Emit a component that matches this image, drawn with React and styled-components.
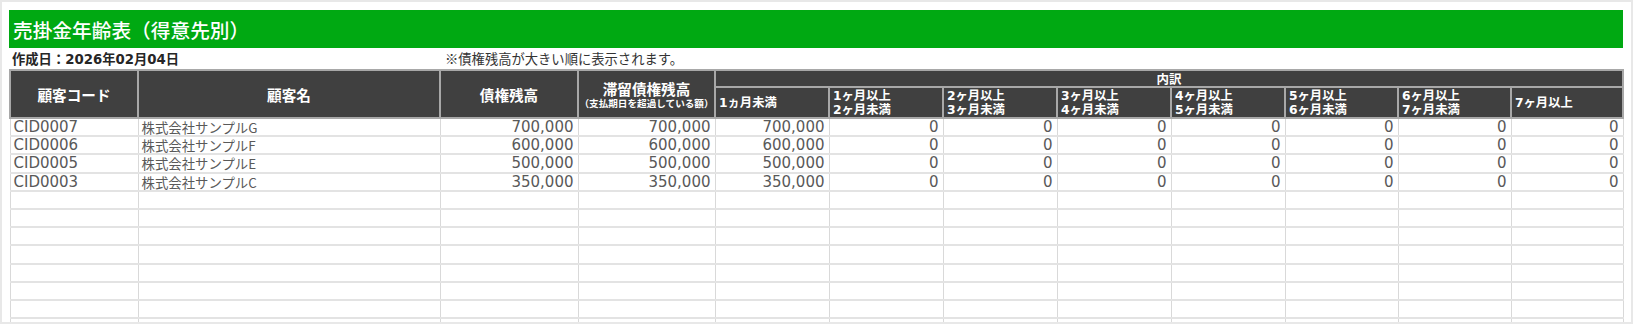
import styled, { createGlobalStyle } from 'styled-components';

const GlobalStyle = createGlobalStyle`
  html, body {
    margin: 0;
    padding: 0;
    background: #ffffff;
  }
  body {
    font-family: "DejaVu Sans", "Noto Sans CJK JP", sans-serif;
  }
`;

const buckets = [
	['1ヵ月未満'],
	['1ヶ月以上', '2ヶ月未満'],
	['2ヶ月以上', '3ヶ月未満'],
	['3ヶ月以上', '4ヶ月未満'],
	['4ヶ月以上', '5ヶ月未満'],
	['5ヶ月以上', '6ヶ月未満'],
	['6ヶ月以上', '7ヶ月未満'],
	['7ヶ月以上'],
];

const customers = [
	{ code: 'CID0007', name: '株式会社サンプルG', total: 700000 },
	{ code: 'CID0006', name: '株式会社サンプルF', total: 600000 },
	{ code: 'CID0005', name: '株式会社サンプルE', total: 500000 },
	{ code: 'CID0003', name: '株式会社サンプルC', total: 350000 },
];

const colWidths = [128, 302, 138, 137, 114, 114, 114, 114, 114, 113, 113, 112];
const EMPTY_ROWS = 8;

const fmt = (n) => n.toLocaleString('en-US');

const App = () => {
	return (
		<>
			<GlobalStyle />
			<Frame>
				<TitleBar>売掛金年齢表（得意先別）</TitleBar>

				<MetaRow>
					<CreatedDate>作成日：2026年02月04日</CreatedDate>
					<Note>※債権残高が大きい順に表示されます。</Note>
				</MetaRow>

				<Sheet>
					<colgroup>
						{colWidths.map((w, i) => (
							<col key={i} style={{ width: w }} />
						))}
					</colgroup>
					<thead>
						<HeadRow $height={17}>
							<HeadCell rowSpan={2}>顧客コード</HeadCell>
							<HeadCell rowSpan={2}>顧客名</HeadCell>
							<HeadCell rowSpan={2}>債権残高</HeadCell>
							<HeadCell rowSpan={2}>
								滞留債権残高
								<SubLabel>（支払期日を超過している額）</SubLabel>
							</HeadCell>
							<GroupCell colSpan={8}>内訳</GroupCell>
						</HeadRow>
						<HeadRow $height={31}>
							{buckets.map((lines, i) => (
								<BucketCell key={i}>
									{lines.map((l) => (
										<div key={l}>{l}</div>
									))}
								</BucketCell>
							))}
						</HeadRow>
					</thead>
					<tbody>
						{customers.map((c) => (
							<BodyRow key={c.code}>
								<Cell $latin>{c.code}</Cell>
								<Cell>{c.name}</Cell>
								<Cell $latin $num>{fmt(c.total)}</Cell>
								<Cell $latin $num>{fmt(c.total)}</Cell>
								{buckets.map((_, i) => (
									<Cell key={i} $latin $num>
										{fmt(i === 0 ? c.total : 0)}
									</Cell>
								))}
							</BodyRow>
						))}
						{Array.from({ length: EMPTY_ROWS }).map((_, r) => (
							<BodyRow key={'e' + r}>
								{colWidths.map((__, i) => (
									<Cell key={i} />
								))}
							</BodyRow>
						))}
					</tbody>
				</Sheet>
			</Frame>
		</>
	);
};

export default App;

const Frame = styled.div`
	box-sizing: border-box;
	height: 100vh;
	border: 2px solid #e8e8e8;
	padding: 8px 8.5px 0 7px;
	overflow: hidden;
	background: #ffffff;
`;
const TitleBar = styled.div`
	height: 38px;
	display: flex;
	align-items: center;
	padding-left: 4px;
	background: #00a912;
	color: #ffffff;
	font-family: "Noto Sans CJK JP", sans-serif;
	font-size: 19.7px;
	font-weight: 500;
`;
const MetaRow = styled.div`
	display: flex;
	align-items: center;
	height: 21px;
	color: #262626;
	font-size: 13.3px;
`;
const CreatedDate = styled.div`
	width: 430px;
	padding-left: 3px;
	font-weight: 700;
`;
const Note = styled.div`
	padding-left: 3px;
	font-family: "Noto Sans CJK JP", sans-serif;
	color: #333333;
`;
const Sheet = styled.table`
	width: 100%;
	table-layout: fixed;
	border-collapse: collapse;
`;
const HeadRow = styled.tr`
	height: ${(p) => p.$height}px;
`;
const HeadCell = styled.th`
	padding: 0;
	background: #404040;
	color: #ffffff;
	border: 2px solid #a8a8a8;
	font-family: "Noto Sans CJK JP", sans-serif;
	font-size: 14.6px;
	font-weight: 700;
	line-height: 17px;
	text-align: center;
	vertical-align: middle;
`;
const SubLabel = styled.div`
	font-size: 9.6px;
	line-height: 12px;
`;
const GroupCell = styled(HeadCell)`
	font-size: 12.5px;
	line-height: 14px;
`;
const BucketCell = styled(HeadCell)`
	text-align: left;
	padding-left: 3px;
	font-family: "DejaVu Sans", "Noto Sans CJK JP", sans-serif;
	font-size: 12.3px;
	line-height: 13.5px;
	padding-top: 2px;
`;
const BodyRow = styled.tr`
	height: 18.2px;
`;
const Cell = styled.td`
	padding: 1px ${(p) => (p.$num ? '4px' : '3px')} 0;
	border-right: 1px solid #d9d9d9;
	border-left: 1px solid #d9d9d9;
	border-bottom: 2px solid #e3e3e3;
	color: #595959;
	font-family: ${(p) =>
		p.$latin ? '"DejaVu Sans", sans-serif' : '"Noto Sans CJK JP", sans-serif'};
	font-size: ${(p) => (p.$latin ? '15px' : '13.4px')};
	line-height: 15px;
	text-align: ${(p) => (p.$num ? 'right' : 'left')};
	white-space: nowrap;
	overflow: hidden;
`;
